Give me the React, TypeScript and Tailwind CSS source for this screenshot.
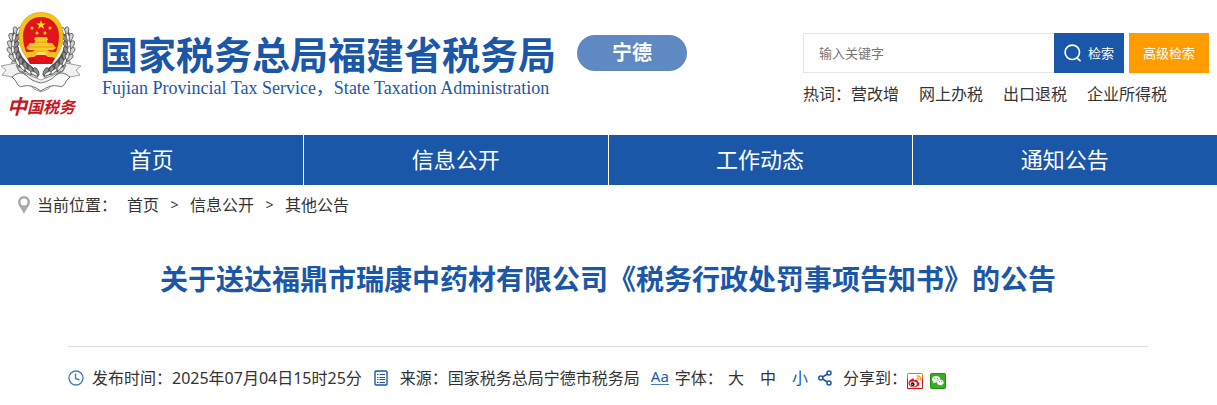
import type { ReactNode } from 'react'

const NAV = ['首页', '信息公开', '工作动态', '通知公告']
const HOT_WORDS = ['营改增', '网上办税', '出口退税', '企业所得税']
const CRUMBS = ['首页', '信息公开', '其他公告']

// Ears of grain down the left side of the emblem; mirrored for the right
const GRAINS = [
  [18, 20, -20], [14, 26, -12], [13, 33, -5], [13, 39, 5], [15, 45, 15], [18, 51, 25], [23, 56, 38], [29, 60, 50], [35, 62, 60],
]

function GrainSide() {
  return (
    <>
      <path d="M17 19Q6 42 36 62" fill="none" stroke="#555" strokeWidth="7" />
      {GRAINS.map(([x, y, r]) => (
        <g key={y} transform={`rotate(${-r} ${x} ${y})`} stroke="#444" strokeWidth="0.7">
          <ellipse cx={x - 2.5} cy={y} rx="2.2" ry="4.5" fill="#d2d2d2" transform={`rotate(-35 ${x - 2.5} ${y})`} />
          <ellipse cx={x + 2.5} cy={y} rx="2.2" ry="4.5" fill="#8d8d8d" transform={`rotate(35 ${x + 2.5} ${y})`} />
          <ellipse cx={x} cy={y - 1} rx="1.500" ry="4" fill="#f5f5f5" />
        </g>
      ))}
    </>
  )
}

function Emblem() {
  return (
    <svg viewBox="0 0 82 82" className="h-[82px] w-[82px]" aria-hidden="true">
      <GrainSide />
      <g transform="translate(82 0) scale(-1 1)"><GrainSide /></g>
      <path d="M41 .5C55 .5 63 11 63 24c0 11-5 19-12 27H31c-7-8-12-16-12-27C19 11 27 .5 41 .5z" fill="#f4c61b" stroke="#dfa516" strokeWidth="0.8" />
      <path d="M41 5c11 0 18 8 18 19 0 12-5 21-9 28H32c-4-7-9-16-9-28C23 13 30 5 41 5z" fill="#e3131b" />
      <path d="M41 8l1.200 3.400h3.500l-2.800 2.100 1.100 3.400-3-2.100-3 2.100 1.100-3.400-2.800-2.100h3.500z" fill="#ffe21a" />
      <g fill="#ffd91a">
        <circle cx="32" cy="16" r="1.500" /><circle cx="50" cy="16" r="1.500" />
        <circle cx="37" cy="21" r="1.500" /><circle cx="45" cy="21" r="1.500" />
      </g>
      <path d="M35 25h12l1 3h-1v3h5l4 5-3 2H29l-3-2 4-5h5v-3h-1z" fill="#f9c924" />
      <path d="M28 35h26M34 30h14" stroke="#e59b17" />
      <path d="M29 38h24v4H29z" fill="#e4321a" />
      <path d="M24 40h8l3-2h12l3 2h8l-2 6-8-1-3-2h-8l-3 2-8 1z" fill="#f5bf1f" />
      <path d="M37 40h8l1 3H36z" fill="#fbe06a" />
      <path d="M27 46l7-1 3 4h8l3-4 7 1-3 6H30z" fill="#d81318" />
      <path d="M1 54l15-3 3 8 22 9 22-9 3-8 15 3-5 4 4 5-10 2Q54 70 48 77l-7 3-7-3Q28 70 12 65L2 63l4-5z" fill="#f1f1f1" stroke="#8a8a8a" strokeWidth="0.8" />
      <path d="M12 65q8-7 14-2 5 6 15 8 10-2 15-8 6-5 14 2-3 2-6 8-2 3-6 1-7-2-17 5-10-7-17-5-4 2-6-1-3-6-6-8z" fill="#fafafa" stroke="#666" strokeWidth="0.9" />
      <path d="M16 53l3 6 7 4M66 53l-3 6-7 4" fill="none" stroke="#777" />
    </svg>
  )
}

function PinIcon() {
  return (
    <svg viewBox="0 0 12 18" className="h-[18px] w-3" aria-hidden="true">
      <path fillRule="evenodd" d="M6 0a6 6 0 0 0-6 6c0 3.500 4 7 6 12 2-5 6-8.500 6-12a6 6 0 0 0-6-6zm0 2.500a3.500 3.500 0 1 1 0 7 3.500 3.500 0 0 1 0-7z" fill="#a9a9a9" />
    </svg>
  )
}

function SearchIcon() {
  return (
    <svg viewBox="0 0 18 18" className="size-[18px]" fill="none" stroke="white" strokeWidth="1.700" aria-hidden="true">
      <circle cx="8.300" cy="8.300" r="7.200" />
      <path d="M13 14l3 2.700" strokeLinecap="round" />
    </svg>
  )
}

function ClockIcon() {
  return (
    <svg viewBox="0 0 16 16" className="size-4" fill="none" stroke="#4a7cc0" strokeWidth="1.400" aria-hidden="true">
      <circle cx="8" cy="8" r="7" />
      <path d="M7.500 3.500V8.500l4 1.500" />
    </svg>
  )
}

function ListIcon() {
  return (
    <svg viewBox="0 0 14 16" className="h-4 w-3.5" fill="none" stroke="#1b57a8" aria-hidden="true">
      <rect x="1" y="1" width="12" height="14" rx="1" strokeWidth="1.400" />
      <path d="M3 4.500h1.500M3 7.500h1.500M3 9.500h1.500M3 12.500h1.500M5.500 4.500H11M5.500 7.500H11M5.500 9.500H11M5.500 12.500H11" />
    </svg>
  )
}

function ShareIcon() {
  return (
    <svg viewBox="0 0 14 16" className="h-4 w-3.5" fill="none" stroke="#1b57a8" strokeWidth="1.500" aria-hidden="true">
      <path d="M4.500 7l5-3M4.500 9l5 3" />
      <circle cx="2.800" cy="8" r="2" />
      <circle cx="11" cy="3" r="2" />
      <circle cx="11" cy="13" r="2" />
    </svg>
  )
}

function WeiboIcon() {
  return (
    <svg viewBox="0 0 16 16" className="size-4" aria-hidden="true">
      <rect x="0.500" y="0.500" width="15" height="15" rx="1" fill="#fff" stroke="#ea6a2a" />
      <path d="M.5 6v9.500h15V6" fill="none" stroke="#d8121b" />
      <path d="M1.500 10.500C1.500 8 5 5 6.700 5.700c1 .4.300 1.500.3 1.500s3.200-1.200 3.700.2c.3.800-.2 1.300-.2 1.300s2 .5 2 2.100c0 2-2.700 3.400-5.500 3.400s-5.500-1.300-5.500-3.700z" fill="#e0162b" />
      <ellipse cx="6.300" cy="11" rx="3.500" ry="2.400" fill="#fff" />
      <circle cx="5.700" cy="11.200" r="1.900" fill="#111" />
      <circle cx="5.200" cy="11.600" r="0.500" fill="#fff" />
      <path d="M9.500 3c3-.5 5 1.500 4.200 4.500M9.800 5.200c1.500-.2 2.200.6 1.900 1.900" fill="none" stroke="#f59a23" strokeWidth="1.300" />
    </svg>
  )
}

function WechatIcon() {
  return (
    <svg viewBox="0 0 16 16" className="size-4" aria-hidden="true">
      <rect x="0.500" y="0.500" width="15" height="15" rx="1" fill="#3bab23" stroke="#1f8f12" />
      <path d="M6.200 3C3.800 3 2 4.500 2 6.400c0 1.100.6 2 1.500 2.600L3.200 10.500l1.600-.9c2.700.6 5.600-.8 5.600-3.200C10.400 4.500 8.600 3 6.200 3z" fill="#fff" />
      <path d="M10.400 6.600c-2.100 0-3.700 1.300-3.700 2.900 0 1.900 2.200 3.300 4.600 2.700l1.400.8-.3-1.300c.9-.5 1.500-1.300 1.500-2.200 0-1.600-1.500-2.900-3.500-2.900z" fill="#fff" stroke="#3bab23" strokeWidth="0.500" />
      <g fill="#3bab23">
        <circle cx="4.800" cy="5.600" r="0.600" /><circle cx="7.500" cy="5.600" r="0.600" />
        <circle cx="9.300" cy="8.800" r="0.500" /><circle cx="11.600" cy="8.800" r="0.500" />
      </g>
    </svg>
  )
}

function TextLink({ children, className = '' }: { children: ReactNode; className?: string }) {
  return <a href="#" className={`hover:text-[#1b57a8] ${className}`}>{children}</a>
}

export default function App() {
  return (
    <div className="bg-white font-['Noto_Sans','Noto_Sans_CJK_SC',sans-serif] text-base leading-6 text-[#333]">
      {/* Header */}
      <header className="flex justify-between pr-2">
        <div className="flex">
          <div className="flex w-[102px] flex-col pt-3">
            <Emblem />
            <div className="flex h-6 w-[82px] items-center justify-center font-['Noto_Sans_CJK_SC',serif] font-bold text-[#c9151e] italic">
              <span className="text-xl">中</span>
              <span className="text-base">国</span>
              <span className="text-base">税</span>
              <span className="text-base">务</span>
            </div>
          </div>
          <div className="pt-8 whitespace-nowrap text-[#1b57a8]">
            <h1 className="-ml-0.5 text-[38px] leading-[44px] font-bold">国家税务总局福建省税务局</h1>
            <p className="font-['Liberation_Serif','Noto_Sans_CJK_SC',serif] text-lg leading-6">
              Fujian Provincial Tax Service，State Taxation Administration
            </p>
          </div>
          <a href="#" className="mt-[35px] ml-[21px] flex h-9 w-[110px] items-center justify-center rounded-full bg-[#5e89c3] text-xl font-bold text-white">
            宁德
          </a>
        </div>

        <div className="w-[406px] pt-[33px]">
          <form className="flex h-10 text-[13px]" onSubmit={e => e.preventDefault()}>
            <input
              type="text"
              aria-label="输入关键字"
              placeholder="输入关键字"
              className="min-w-0 flex-1 border border-r-0 border-[#e5e5e5] px-[15px] outline-none placeholder:text-[#757575]"
            />
            <button type="submit" className="flex w-[70px] items-center justify-center gap-1.5 bg-[#1b57a8] text-white">
              <SearchIcon />
              检索
            </button>
            <button type="button" className="ml-[5px] w-20 bg-[#ff9c00] text-white">高级检索</button>
          </form>
          <div className="mt-[9px] flex whitespace-nowrap">
            <span>热词：</span>
            <div className="flex gap-5">
              {HOT_WORDS.map(w => <TextLink key={w}>{w}</TextLink>)}
            </div>
          </div>
        </div>
      </header>

      {/* Main navigation */}
      <nav className="mt-[17px] grid grid-cols-4 bg-[#1b57a8] text-[22px] text-white">
        {NAV.map(item => (
          <a key={item} href="#" className="flex h-[50px] items-center justify-center border-r border-white pb-0.5 last:border-r-0">
            {item}
          </a>
        ))}
      </nav>

      {/* Breadcrumb */}
      <div className="flex items-center pt-2 pl-[18px]">
        <PinIcon />
        <span className="ml-[7px]">当前位置：</span>
        <div className="ml-2.5 flex">
          {CRUMBS.map((c, i) => (
            <span key={c} className="flex">
              {i > 0 && <span className="w-[31px] text-center text-sm leading-6">&gt;</span>}
              <TextLink>{c}</TextLink>
            </span>
          ))}
        </div>
      </div>

      {/* Article heading */}
      <main className="mr-[69px] ml-[68px]">
        <h2 className="pt-[42px] text-center text-[28px] leading-10 font-bold text-[#1b57a8]">
          关于送达福鼎市瑞康中药材有限公司《税务行政处罚事项告知书》的公告
        </h2>
        <div className="mt-[47px] flex items-center border-t border-[#ddd] pt-[19px] whitespace-nowrap">
          <ClockIcon />
          <span className="ml-2">发布时间：2025年07月04日15时25分</span>
          <span className="ml-3 flex items-center gap-3">
            <ListIcon />
            来源：国家税务总局宁德市税务局
          </span>
          <span className="mb-0.5 ml-[11px] border-b border-[#4a7cc0] text-[15px] leading-[15px] text-[#1b57a8]">Aa</span>
          <span className="ml-1.5">字体：</span>
          <span className="ml-[5px] flex gap-4">
            <button type="button">大</button>
            <button type="button">中</button>
            <button type="button" className="text-[#1b57a8]">小</button>
          </span>
          <span className="ml-2.5 flex items-center gap-[11px]">
            <ShareIcon />
            分享到：
          </span>
          <a href="#" aria-label="分享到新浪微博" className="mt-1.5"><WeiboIcon /></a>
          <a href="#" aria-label="分享到微信" className="mt-1.5 ml-[7px]"><WechatIcon /></a>
        </div>
      </main>
    </div>
  )
}
